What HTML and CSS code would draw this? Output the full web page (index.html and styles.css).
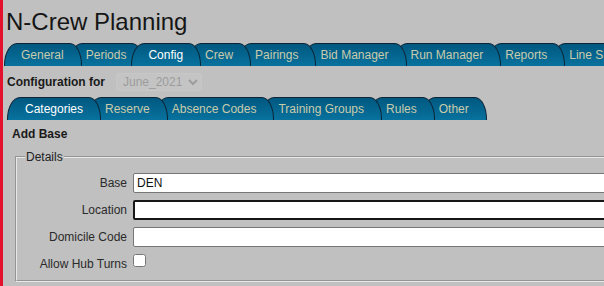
FILE: index.html
```html
<!DOCTYPE html>
<html lang="en">
<head>
    <meta charset="UTF-8">
    <meta name="viewport" content="width=device-width, initial-scale=1.0">
    <title>N-Crew Planning</title>
    <link rel="stylesheet" href="styles.css">
</head>
<body>
    <div class="page">
        <!-- Header -->
        <h1 class="title">N-Crew Planning</h1>

        <!-- Main tabs -->
        <div class="tabs tabs-main">
            <a class="tab">General</a>
            <a class="tab">Periods</a>
            <a class="tab active">Config</a>
            <a class="tab">Crew</a>
            <a class="tab">Pairings</a>
            <a class="tab">Bid Manager</a>
            <a class="tab">Run Manager</a>
            <a class="tab">Reports</a>
            <a class="tab">Line Summary</a>
            <a class="tab">Admin</a>
        </div>

        <!-- Period selector -->
        <div class="config-row">
            <span class="config-label">Configuration for</span>
            <select class="period-select" disabled>
                <option>June_2021</option>
            </select>
        </div>

        <!-- Config tabs -->
        <div class="tabs tabs-sub">
            <a class="tab active">Categories</a>
            <a class="tab">Reserve</a>
            <a class="tab">Absence Codes</a>
            <a class="tab">Training Groups</a>
            <a class="tab">Rules</a>
            <a class="tab">Other</a>
        </div>

        <!-- Form -->
        <div class="section-title">Add Base</div>

        <fieldset class="details">
            <legend>Details</legend>
            <div class="form-grid">
                <label class="field-label">Base</label>
                <input class="field-input" type="text" value="DEN">

                <label class="field-label">Location</label>
                <input class="field-input focused" type="text">

                <label class="field-label">Domicile Code</label>
                <input class="field-input" type="text">

                <label class="field-label">Allow Hub Turns</label>
                <input class="field-check" type="checkbox">
            </div>
        </fieldset>
    </div>
</body>
</html>
```

FILE: styles.css
```css
* {
    box-sizing: border-box;
}

html, body {
    margin: 0;
    padding: 0;
    height: 100%;
}

body {
    background: #c0c0c0;
    border-left: 3px solid #e3112b;
    font-family: "Liberation Sans", Arial, sans-serif;
    font-size: 12px;
    color: #222;
    overflow: hidden;
}

.page {
    width: 1000px;
    padding-left: 1px;
}

.title {
    margin: 0;
    padding: 8px 0 0 2px;
    font-size: 24px;
    font-weight: normal;
    line-height: 28px;
    color: #161616;
}

/* Tabs */
.tabs {
    display: flex;
    margin-top: 7px;
}

.tabs-sub {
    margin-top: 6px;
    padding-left: 3px;
}

.tab {
    position: relative;
    flex-shrink: 0;
    white-space: nowrap;
    height: 23px;
    padding: 4px 17px 0 16px;
    margin-left: -13px;
    line-height: 15px;
    font-size: 12px;
    color: #c9cbac;
    background: linear-gradient(#005880, #08729e);
    border: 1.5px solid #0d2536;
    border-bottom: none;
    border-radius: 13px 12px 0 0 / 22px 22px 0 0;
}

.tab:first-child {
    margin-left: 0;
}

.tabs-sub .tab:first-child {
    padding-left: 17px;
}

.tab:nth-child(1) { z-index: 10; }
.tab:nth-child(2) { z-index: 9; }
.tab:nth-child(3) { z-index: 8; }
.tab:nth-child(4) { z-index: 7; }
.tab:nth-child(5) { z-index: 6; }
.tab:nth-child(6) { z-index: 5; }
.tab:nth-child(7) { z-index: 4; }
.tab:nth-child(8) { z-index: 3; }
.tab:nth-child(9) { z-index: 2; }
.tab:nth-child(10) { z-index: 1; }

.tab.active {
    z-index: 20;
    color: #ffffff;
}

/* Config row */
.config-row {
    display: flex;
    align-items: center;
    height: 18px;
    margin-top: 7px;
    padding-left: 3px;
    gap: 11px;
}

.config-label,
.section-title {
    font-weight: bold;
    color: #1a1a1a;
    line-height: 14px;
}

.period-select {
    width: 86px;
    height: 18px;
    padding: 0 2px;
    font-family: "Liberation Sans", Arial, sans-serif;
    font-size: 12px;
    color: #8e8e8e;
    background: #c6c6c6;
    border: 1px solid #cacaca;
    border-radius: 2px;
}

/* Form */
.section-title {
    margin: 7px 0 0 8px;
}

.details {
    margin: 9px 0 0 11px;
    padding: 9px 0 6px 0;
    border: 2px groove #e8e8e8;
}

.details legend {
    margin-left: 8px;
    padding: 0 1px;
    font-size: 12px;
    line-height: 14px;
    color: #222;
}

.form-grid {
    display: grid;
    grid-template-columns: 110px 1fr;
    grid-auto-rows: 20px;
    row-gap: 7px;
    column-gap: 6px;
    align-items: center;
}

.field-label {
    text-align: right;
    color: #2a2a2a;
    line-height: 14px;
}

.field-input {
    height: 20px;
    width: 100%;
    padding: 0 3px;
    font-family: "Liberation Sans", Arial, sans-serif;
    font-size: 12px;
    color: #111;
    background: #fff;
    border: 1px solid #767676;
    border-radius: 2px;
}

.field-input.focused {
    border: 2px solid #161616;
    padding: 0 2px;
}

.field-check {
    align-self: start;
    width: 13px;
    height: 13px;
    margin: 0;
}
```
